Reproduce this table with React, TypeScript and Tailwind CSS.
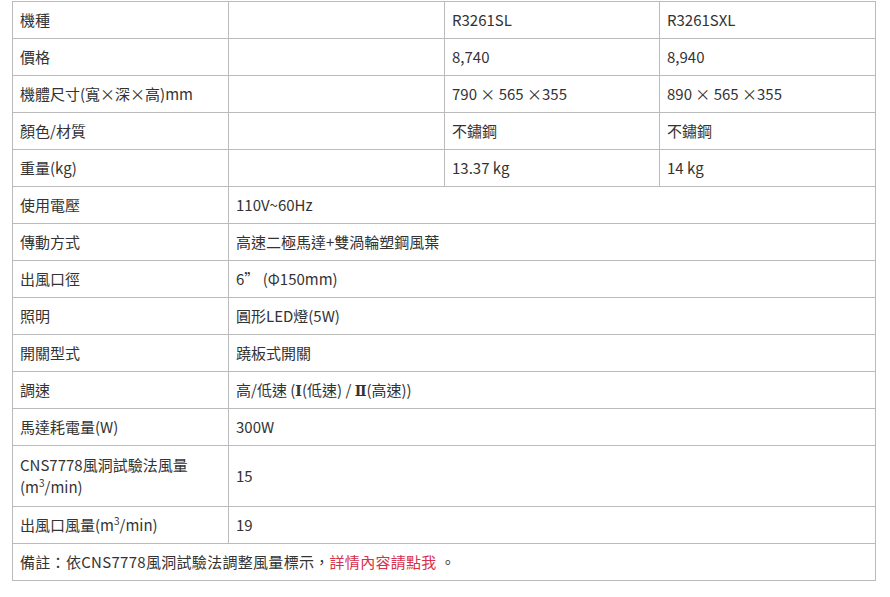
import React from "react";

const font = { fontFamily: '"Noto Sans CJK TC", "Noto Sans", sans-serif' };

const td = "border border-[#bbbbbb] px-[7px] py-0 align-middle text-left font-normal";

function Sup() {
  return <span className="relative top-[-6px] text-[10px] leading-none">3</span>;
}

export default function App() {
  const top: [string, string, string][] = [
    ["機種", "R3261SL", "R3261SXL"],
    ["價格", "8,740", "8,940"],
    ["機體尺寸(寬×深×高)mm", "790 × 565 ×355", "890 × 565 ×355"],
    ["顏色/材質", "不鏽鋼", "不鏽鋼"],
    ["重量(kg)", "13.37 kg", "14 kg"],
  ];
  const roman = "font-['DejaVu_Serif',serif] text-[14px] font-bold";
  const mid: [string, React.ReactNode][] = [
    ["使用電壓", "110V~60Hz"],
    ["傳動方式", "高速二極馬達+雙渦輪塑鋼風葉"],
    ["出風口徑", "6” (Φ150mm)"],
    ["照明", "圓形LED燈(5W)"],
    ["開關型式", "蹺板式開關"],
    [
      "調速",
      <>
        高/低速 (<span className={roman}>Ⅰ</span>(低速) / <span className={roman}>Ⅱ</span>(高速))
      </>,
    ],
    ["馬達耗電量(W)", "300W"],
  ];
  return (
    <div className="w-[890px] h-[597px] bg-white pt-px pl-[12px]" style={font}>
      <table className="border-collapse table-fixed w-[863px] text-[15px] leading-[22px] text-[#333333]">
        <colgroup>
          <col className="w-[216px]" />
          <col className="w-[216px]" />
          <col className="w-[215px]" />
          <col className="w-[216px]" />
        </colgroup>
        <tbody>
          {top.map(([a, b, c]) => (
            <tr key={a} className="h-[37px]">
              <td className={td}>{a}</td>
              <td className={td}></td>
              <td className={td}>{b}</td>
              <td className={td}>{c}</td>
            </tr>
          ))}
          {mid.map(([a, b]) => (
            <tr key={a} className="h-[37px]">
              <td className={td}>{a}</td>
              <td className={td} colSpan={3}>{b}</td>
            </tr>
          ))}
          <tr className="h-[61px]">
            <td className={td}>
              CNS7778風洞試驗法風量
              <br />
              (m<Sup />/min)
            </td>
            <td className={td} colSpan={3}>15</td>
          </tr>
          <tr className="h-[37px]">
            <td className={td}>
              出風口風量(m<Sup />/min)
            </td>
            <td className={td} colSpan={3}>19</td>
          </tr>
          <tr className="h-[37px]">
            <td className={`${td} tracking-[0.3px]`} colSpan={4}>
              備註：依CNS7778風洞試驗法調整風量標示，
              <span className="text-[#d7304a]">詳情內容請點我</span> 。
            </td>
          </tr>
        </tbody>
      </table>
    </div>
  );
}
